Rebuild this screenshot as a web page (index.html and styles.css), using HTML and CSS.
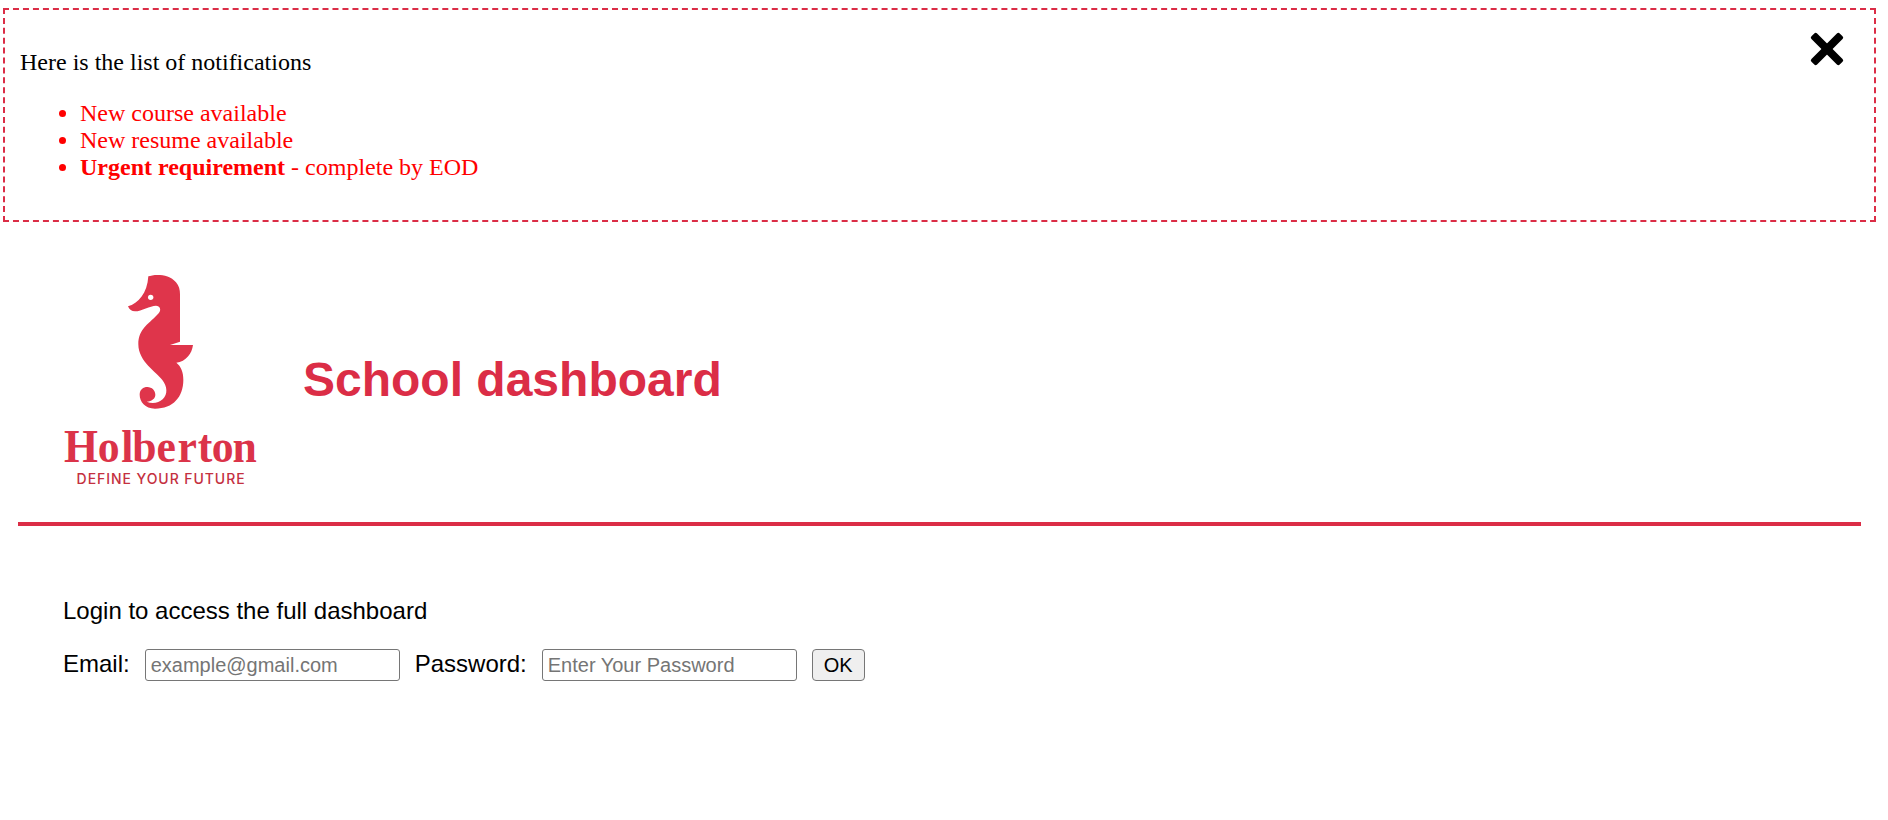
FILE: index.html
```html
<!DOCTYPE html>
<html lang="en">
<head>
<meta charset="utf-8">
<title>School dashboard</title>
<link rel="stylesheet" href="styles.css">
</head>
<body>
<section class="notifications">
  <button class="close" aria-label="Close">
    <svg width="36" height="36" viewBox="-18 -18 36 36">
      <rect x="-20" y="-4" width="40" height="8" rx="2" transform="rotate(45)"/>
      <rect x="-20" y="-4" width="40" height="8" rx="2" transform="rotate(-45)"/>
    </svg>
  </button>
  <p>Here is the list of notifications</p>
  <ul>
    <li>New course available</li>
    <li>New resume available</li>
    <li><strong>Urgent requirement</strong> - complete by EOD</li>
  </ul>
</section>
<header class="header">
  <svg class="logo" width="220" height="230" viewBox="50 265 220 230" role="img" aria-label="Holberton">
    <g transform="translate(110 265) scale(.33333)">
      <path class="horse" d="M115 34C130 28 176 24 198 52C207 63 210 74 210 88V230L180 240H249C246 265 228 290 199 293C213 304 220 320 220 345C220 395 190 431 135 431C105 430 89 410 89 389C89 374 100 366 112 366C126 366 136 377 136 389C136 400 127 408 110 410C127 418 146 414 158 403C174 388 172 364 157 345C140 322 85 290 85 238C85 190 120 175 146 145C155 134 150 123 138 122C120 122 95 139 75 139C65 139 58 134 54 124C85 116 112 85 115 34Z"/>
      <circle class="eye" cx="122" cy="97" r="8"/>
    </g>
    <text class="wordmark" transform="scale(.93 1)" x="68.8 105.2 130.4 142.2 168.4 191 212.6 227.8 250" y="462">Holberton</text>
    <text class="tagline" x="76.6" y="483.6" textLength="168">DEFINE YOUR FUTURE</text>
  </svg>
  <h1>School dashboard</h1>
</header>
<main class="login">
  <p>Login to access the full dashboard</p>
  <form class="form">
    <label for="email">Email:</label>
    <input id="email" type="email" placeholder="example@gmail.com">
    <label for="password">Password:</label>
    <input id="password" type="password" placeholder="Enter Your Password">
    <button type="button" class="ok">OK</button>
  </form>
</main>
</body>
</html>
```
FILE: styles.css
```css
* { box-sizing: border-box; }
body {
  margin: 0;
  padding-top: 8px;
  background: #fff;
  color: #000;
  font: 24px/27px "Liberation Sans", Arial, sans-serif;
}
.notifications {
  position: relative;
  height: 214px;
  margin: 0 12px 0 3px;
  padding: 15px;
  border: 2px dashed #db2d46;
  font-family: "Liberation Serif", "Times New Roman", serif;
}
.notifications p { margin: 24px 0; }
.notifications ul {
  margin: 0;
  padding-left: 60px;
  color: #f00;
}
.close {
  position: absolute;
  top: 21.4px;
  right: 28.6px;
  padding: 0;
  border: 0;
  background: none;
}
.close svg { display: block; }
.header {
  display: flex;
  align-items: flex-start;
  height: 304px;
  margin: 0 27px 0 18px;
  padding: 43px 0 0 32px;
  border-bottom: 4px solid #db2d46;
}
.logo { flex: none; }
.horse { fill: #df354b; }
.eye { fill: #fff; }
.wordmark {
  fill: #db3349;
  font: bold 47px "Liberation Serif", "Times New Roman", serif;
}
.tagline {
  fill: #c4303f;
  font: 500 14px Inter, sans-serif;
}
h1 {
  margin: 88px 0 0 33px;
  color: #db2d46;
  font-size: 48px;
  line-height: 54px;
}
.login {
  padding: 71px 0 0 63px;
}
.login p { margin: 0; }
.form {
  display: flex;
  align-items: flex-start;
  margin-top: 25px;
}
.form label { margin-right: 15px; padding-top: 1px; }
.form input {
  width: 255px;
  height: 32px;
  margin: 0 15px 0 0;
  padding: 2px 5px;
  border: 1px solid #767676;
  border-radius: 3px;
  font: 20px "Liberation Sans", Arial, sans-serif;
}
.form input::placeholder { color: #757575; }
.ok {
  width: 53px;
  height: 32px;
  padding: 0;
  border: 1px solid #767676;
  border-radius: 4px;
  background: #efefef;
  color: #000;
  font: 20px "Liberation Sans", Arial, sans-serif;
}
```
